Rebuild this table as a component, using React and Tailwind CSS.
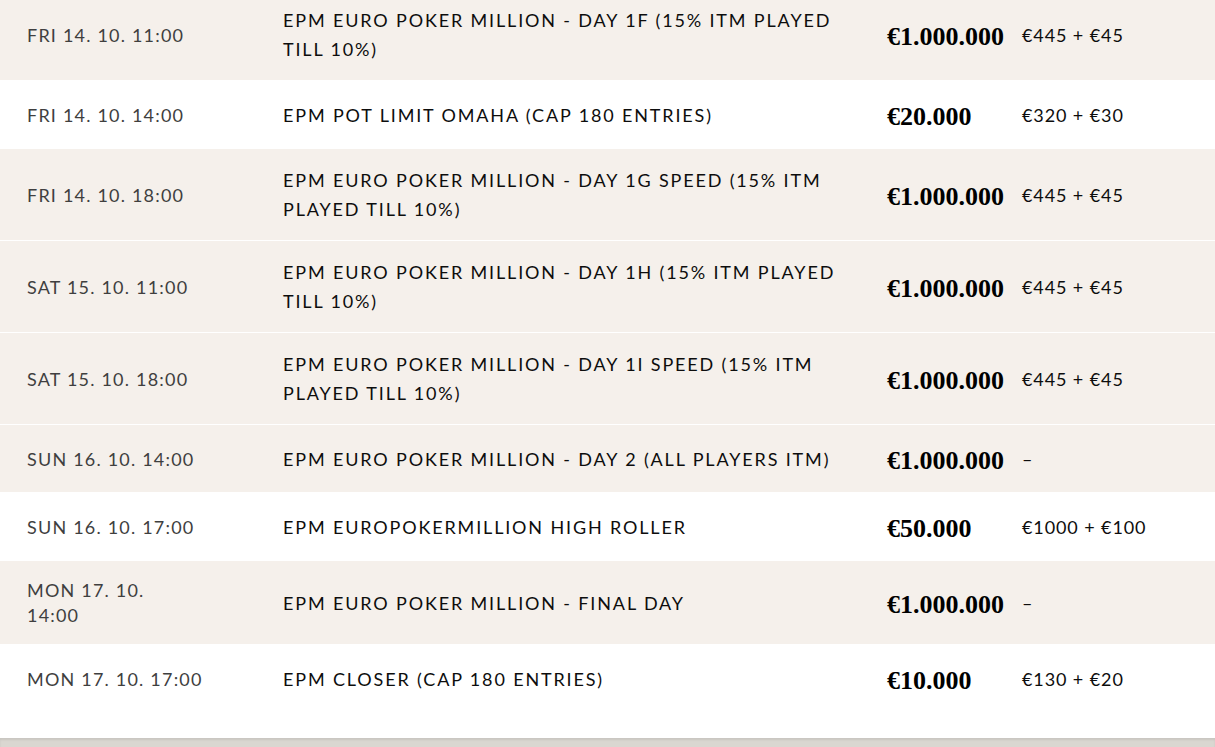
import React from "react";

const rows = [
  { date: ["FRI 14. 10. 11:00"], title: ["EPM EURO POKER MILLION - DAY 1F (15% ITM PLAYED", "TILL 10%)"], prize: "€1.000.000", buy: "€445 + €45", bg: "beige" },
  { date: ["FRI 14. 10. 14:00"], title: ["EPM POT LIMIT OMAHA (CAP 180 ENTRIES)"], prize: "€20.000", buy: "€320 + €30", bg: "white" },
  { date: ["FRI 14. 10. 18:00"], title: ["EPM EURO POKER MILLION - DAY 1G SPEED (15% ITM", "PLAYED TILL 10%)"], prize: "€1.000.000", buy: "€445 + €45", bg: "beige" },
  { date: ["SAT 15. 10. 11:00"], title: ["EPM EURO POKER MILLION - DAY 1H (15% ITM PLAYED", "TILL 10%)"], prize: "€1.000.000", buy: "€445 + €45", bg: "beige" },
  { date: ["SAT 15. 10. 18:00"], title: ["EPM EURO POKER MILLION - DAY 1I SPEED (15% ITM", "PLAYED TILL 10%)"], prize: "€1.000.000", buy: "€445 + €45", bg: "beige" },
  { date: ["SUN 16. 10. 14:00"], title: ["EPM EURO POKER MILLION - DAY 2 (ALL PLAYERS ITM)"], prize: "€1.000.000", buy: "–", bg: "beige" },
  { date: ["SUN 16. 10. 17:00"], title: ["EPM EUROPOKERMILLION HIGH ROLLER"], prize: "€50.000", buy: "€1000 + €100", bg: "white" },
  { date: ["MON 17. 10.", "14:00"], title: ["EPM EURO POKER MILLION - FINAL DAY"], prize: "€1.000.000", buy: "–", bg: "beige" },
  { date: ["MON 17. 10. 17:00"], title: ["EPM CLOSER (CAP 180 ENTRIES)"], prize: "€10.000", buy: "€130 + €20", bg: "white" },
];

function Row({ r }) {
  return (
    <div
      className={
        "flex items-center pt-[17px] pb-[16px] border-b border-white " +
        (r.bg === "beige" ? "bg-[#f5f0eb]" : "bg-white")
      }
    >
      <div className="w-[283px] shrink-0 pl-[27px] text-[18px] leading-[25px] tracking-[1.2px] text-[#3f3f3f] whitespace-nowrap">
        {r.date.map((d, i) => (
          <div key={i}>{d}</div>
        ))}
      </div>
      <div className="w-[604px] shrink-0 text-[18px] leading-[29px] tracking-[1.85px] text-[#0d0d0d] whitespace-nowrap">
        {r.title.map((t, i) => (
          <div key={i}>{t}</div>
        ))}
      </div>
      <div
        className="w-[135px] shrink-0 pt-[3px] text-[26px] leading-[31px] font-bold text-black whitespace-nowrap"
        style={{ fontFamily: '"Liberation Serif", "DejaVu Serif", serif' }}
      >
        {r.prize}
      </div>
      <div className="flex-1 text-[18px] leading-[25px] tracking-[0.9px] text-[#0d0d0d] whitespace-nowrap">{r.buy}</div>
    </div>
  );
}

export default function App() {
  return (
    <div
      className="w-[1215px] h-[747px] overflow-hidden bg-white flex flex-col"
      style={{ fontFamily: 'Lato, "Noto Sans", sans-serif' }}
    >
      <div className="-mt-[11px]">
        {rows.map((r, i) => (
          <Row key={i} r={r} />
        ))}
      </div>
      <div className="h-[27px] bg-white" />
      <div className="h-[10px] bg-[#dad7d1] shadow-[inset_0_2px_2px_rgba(0,0,0,0.08)]" />
    </div>
  );
}
